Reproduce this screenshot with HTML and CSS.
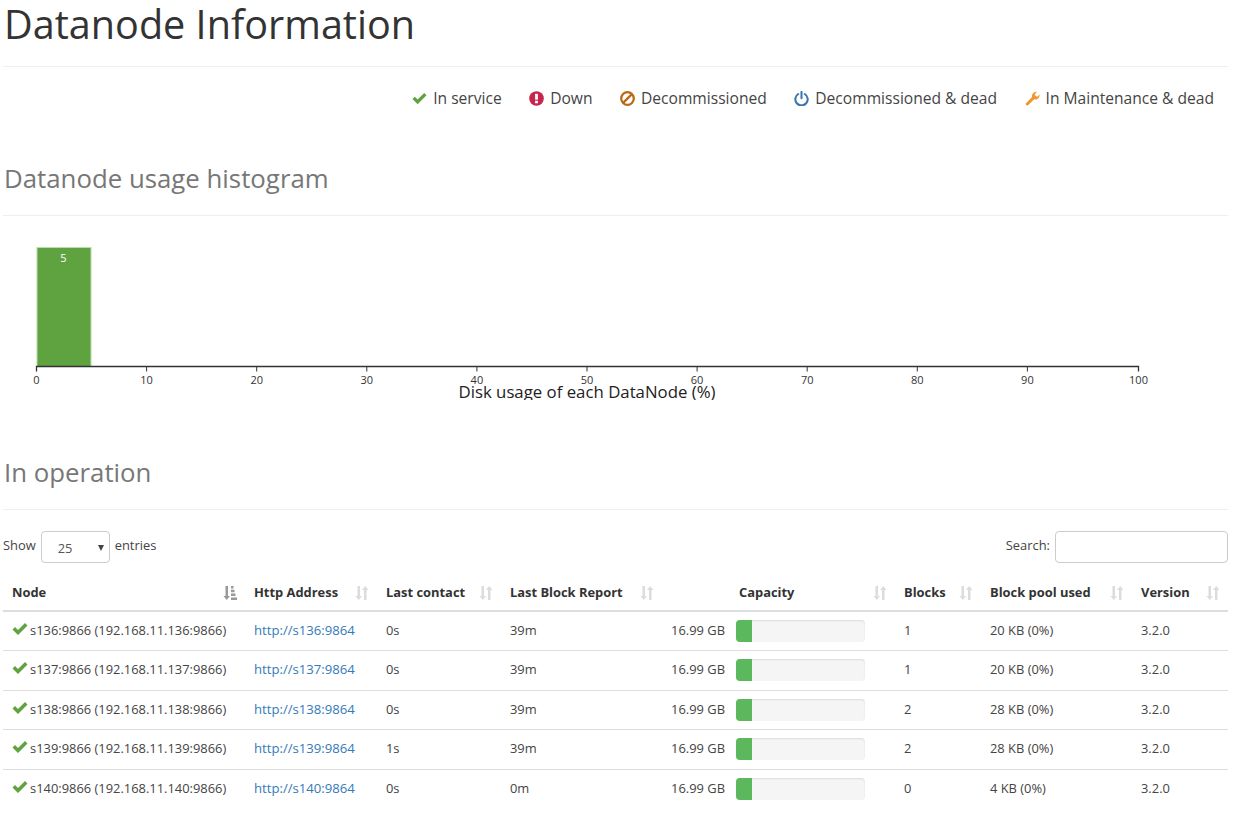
FILE: index.html
```html
<!DOCTYPE html>
<html lang="en">
<head>
  <meta charset="UTF-8" />
  <title>Datanode Information</title>
  <link rel="stylesheet" href="styles.css">
</head>
<body>
  <svg class="defs" width="0" height="0" aria-hidden="true">
    <symbol id="i-ok" viewBox="0 0 16 16"><path d="M0.5 8.6 3 6.1 6 9.1 13 2.1 15.5 4.6 6 14.1Z"/></symbol>
    <symbol id="i-sort" viewBox="0 0 14 16"><path d="M2.5 1H5V11H7L3.7 15 0.5 11H2.5Z"/><path d="M9 15H11.500V5H13.500L10.200 1 7 5H9Z"/></symbol>
    <symbol id="i-sort-asc" viewBox="0 0 14 16"><path d="M2.500 1H5V11H7L3.700 15 0.500 11H2.500Z"/><path d="M8 1H10.500V3.500H8ZM8 4.800H11.500V7.300H8ZM8 8.600H12.500V11.100H8ZM8 12.400H14V14.900H8Z"/></symbol>
  </svg>

  <h1 class="page-title">Datanode Information</h1>

  <ul class="legend">
    <li class="st-alive"><svg class="st-icon"><use href="#i-ok"/></svg>In service</li>
    <li class="st-down">
      <svg class="st-icon" viewBox="0 0 16 16"><circle cx="8" cy="8" r="7.800"/><rect class="cut" x="6.500" y="3" width="3" height="6.200"/><rect class="cut" x="6.500" y="10.400" width="3" height="2.700"/></svg>Down</li>
    <li class="st-decom">
      <svg class="st-icon" viewBox="0 0 16 16"><circle class="ring" cx="8" cy="8" r="6.700"/><path class="ring" d="M3.300 12.700 12.700 3.300"/></svg>Decommissioned</li>
    <li class="st-decom-dead">
      <svg class="st-icon" viewBox="0 0 16 16"><path class="ring" d="M4.500 3.200A6.600 6.600 0 1 0 11.500 3.200"/><path class="ring" d="M8 1V7.800"/></svg>Decommissioned &amp; dead</li>
    <li class="st-maint">
      <svg class="st-icon" viewBox="0 0 16 16"><path d="M0.800 13.400 7.600 6.400C6.900 3.600 9.200 0.400 13 0.800L10.400 3.400 11.200 5.400 13.200 6 15.600 3.600C15.800 7.200 13 9.600 9.800 8.800L3 15.400C2 16 0.200 14.600 0.800 13.400Z"/></svg>In Maintenance &amp; dead</li>
  </ul>

  <h2 class="section-title section-histogram">Datanode usage histogram</h2>

  <svg class="histogram" width="1225" height="184" viewBox="0 0 1225 184">
    <rect class="bar" x="34" y="31.500" width="54" height="119"/>
    <text class="bar-label" x="60.500" y="46">5</text>
    <path class="axis" d="M33.500 155.500V150.500H1135.500V155.500"/>
    <g class="ticks">
      <path d="M143.600 150.500v5M253.700 150.500v5M363.800 150.500v5M473.900 150.500v5M584 150.500v5M694.100 150.500v5M804.200 150.500v5M914.300 150.500v5M1024.400 150.500v5"/>
    </g>
    <g class="tick-labels">
      <text x="33.500" y="168">0</text>
      <text x="143.600" y="168">10</text>
      <text x="253.700" y="168">20</text>
      <text x="363.800" y="168">30</text>
      <text x="473.900" y="168">40</text>
      <text x="584" y="168">50</text>
      <text x="694.100" y="168">60</text>
      <text x="804.200" y="168">70</text>
      <text x="914.300" y="168">80</text>
      <text x="1024.400" y="168">90</text>
      <text x="1135.500" y="168">100</text>
    </g>
    <text class="axis-title" x="584" y="182">Disk usage of each DataNode (%)</text>
  </svg>

  <h2 class="section-title section-operation">In operation</h2>

  <div class="table-controls">
    <label class="length-control">Show
      <span class="select-wrap">
        <select><option>25</option><option>50</option><option>100</option></select>
      </span>
      entries</label>
    <label class="search-control">Search: <input type="search" /></label>
  </div>

  <table class="nodes">
    <colgroup>
      <col class="c-node"><col class="c-http"><col class="c-contact"><col class="c-report">
      <col class="c-capacity"><col class="c-blocks"><col class="c-pool"><col class="c-version">
    </colgroup>
    <thead>
      <tr>
        <th>Node<svg class="sort sorted"><use href="#i-sort-asc"/></svg></th>
        <th>Http Address<svg class="sort"><use href="#i-sort"/></svg></th>
        <th>Last contact<svg class="sort"><use href="#i-sort"/></svg></th>
        <th>Last Block Report<svg class="sort"><use href="#i-sort"/></svg></th>
        <th class="th-capacity">Capacity<svg class="sort"><use href="#i-sort"/></svg></th>
        <th>Blocks<svg class="sort"><use href="#i-sort"/></svg></th>
        <th>Block pool used<svg class="sort"><use href="#i-sort"/></svg></th>
        <th>Version<svg class="sort"><use href="#i-sort"/></svg></th>
      </tr>
    </thead>
    <tbody>
      <tr>
        <td class="node"><svg class="node-ok"><use href="#i-ok"/></svg>s136:9866 (192.168.11.136:9866)</td>
        <td><a href="#">http://s136:9864</a></td>
        <td>0s</td><td>39m</td>
        <td><div class="capacity"><span>16.99 GB</span><div class="progress"><div class="progress-bar"></div></div></div></td>
        <td>1</td><td>20 KB (0%)</td><td>3.2.0</td>
      </tr>
      <tr>
        <td class="node"><svg class="node-ok"><use href="#i-ok"/></svg>s137:9866 (192.168.11.137:9866)</td>
        <td><a href="#">http://s137:9864</a></td>
        <td>0s</td><td>39m</td>
        <td><div class="capacity"><span>16.99 GB</span><div class="progress"><div class="progress-bar"></div></div></div></td>
        <td>1</td><td>20 KB (0%)</td><td>3.2.0</td>
      </tr>
      <tr>
        <td class="node"><svg class="node-ok"><use href="#i-ok"/></svg>s138:9866 (192.168.11.138:9866)</td>
        <td><a href="#">http://s138:9864</a></td>
        <td>0s</td><td>39m</td>
        <td><div class="capacity"><span>16.99 GB</span><div class="progress"><div class="progress-bar"></div></div></div></td>
        <td>2</td><td>28 KB (0%)</td><td>3.2.0</td>
      </tr>
      <tr>
        <td class="node"><svg class="node-ok"><use href="#i-ok"/></svg>s139:9866 (192.168.11.139:9866)</td>
        <td><a href="#">http://s139:9864</a></td>
        <td>1s</td><td>39m</td>
        <td><div class="capacity"><span>16.99 GB</span><div class="progress"><div class="progress-bar"></div></div></div></td>
        <td>2</td><td>28 KB (0%)</td><td>3.2.0</td>
      </tr>
      <tr>
        <td class="node"><svg class="node-ok"><use href="#i-ok"/></svg>s140:9866 (192.168.11.140:9866)</td>
        <td><a href="#">http://s140:9864</a></td>
        <td>0s</td><td>0m</td>
        <td><div class="capacity"><span>16.99 GB</span><div class="progress"><div class="progress-bar"></div></div></div></td>
        <td>0</td><td>4 KB (0%)</td><td>3.2.0</td>
      </tr>
    </tbody>
  </table>
</body>
</html>
```
FILE: styles.css
```css
html, body {
  margin: 0;
  padding: 0;
  background: #fff;
}
body {
  font-family: "Open Sans", "Noto Sans", sans-serif;
  color: #333;
  font-size: 12.900px;
  padding: 0 12px 0 3px;
}
.defs {
  display: block;
  height: 0;
}
.page-title {
  font-size: 39.600px;
  font-weight: 400;
  line-height: 48px;
  margin: 0;
  padding: 0 0 18px 1px;
  border-bottom: 1px solid #eee;
  color: #333;
}
.legend {
  list-style: none;
  margin: 0;
  padding: 20px 14px 0 0;
  display: flex;
  justify-content: flex-end;
  gap: 27.500px;
  font-size: 15.600px;
  line-height: 22px;
}
.legend li {
  display: flex;
  align-items: center;
  color: #444;
}
.st-icon {
  width: 15px;
  height: 15px;
  margin-right: 6px;
}
.st-alive .st-icon { fill: #5fa341; }
.st-down .st-icon { fill: #c7254e; }
.st-down .cut { fill: #fff; }
.st-decom .ring { fill: none; stroke: #b96a15; stroke-width: 2.400; }
.st-decom-dead .ring { fill: none; stroke: #3a76ad; stroke-width: 2.200; stroke-linecap: round; }
.st-maint .st-icon { fill: #f0962f; }
.section-title {
  font-size: 25.800px;
  font-weight: 400;
  line-height: 34px;
  color: #777;
  margin: 0;
  padding: 0 0 20px 1px;
  border-bottom: 1px solid #eee;
}
.section-histogram { margin-top: 52px; }
.section-operation { margin-top: 55px; }
.histogram {
  display: block;
  font-family: "Open Sans", sans-serif;
}
.bar { fill: #5fa341; stroke: #bcdcae; stroke-width: 1; }
.bar-label { fill: #fff; font-size: 11px; text-anchor: middle; }
.axis { fill: none; stroke: #333; stroke-width: 1.300; }
.ticks path { fill: none; stroke: #333; stroke-width: 1; }
.tick-labels text { font-size: 11px; fill: #333; text-anchor: middle; }
.axis-title { font-size: 16.800px; fill: #222; text-anchor: middle; }
.table-controls {
  display: flex;
  justify-content: space-between;
  align-items: center;
  margin-top: 19px;
  height: 32px;
}
.length-control, .search-control {
  display: flex;
  align-items: center;
  gap: 5px;
  color: #444;
}
.select-wrap {
  position: relative;
  display: block;
  margin: 2px 0 -2px;
}
.select-wrap::after {
  content: "";
  position: absolute;
  right: 6px;
  top: 14px;
  border-left: 3.500px solid transparent;
  border-right: 3.500px solid transparent;
  border-top: 6px solid #444;
}
.select-wrap select {
  appearance: none;
  display: block;
  width: 69px;
  height: 32px;
  padding: 2px 0 0 16px;
  border: 1px solid #ccc;
  border-radius: 4px;
  background: #fff;
  color: #555;
  font: inherit;
}
.search-control input {
  width: 173px;
  height: 32px;
  margin: 2px 0 -2px;
  box-sizing: border-box;
  border: 1px solid #ccc;
  border-radius: 4px;
  background: #fff;
  outline: none;
}
.nodes {
  width: 1225px;
  table-layout: fixed;
  border-collapse: collapse;
  margin-top: 13px;
}
.c-node { width: 242px; }
.c-http { width: 132px; }
.c-contact { width: 124px; }
.c-report { width: 161px; }
.c-capacity { width: 233px; }
.c-blocks { width: 86px; }
.c-pool { width: 151px; }
.c-version { width: 96px; }
.nodes th {
  position: relative;
  height: 36px;
  padding: 0 9px;
  text-align: left;
  font-weight: 700;
  border-bottom: 2px solid #ddd;
  white-space: nowrap;
}
.nodes th.th-capacity { padding-left: 77px; }
.sort {
  position: absolute;
  right: 8px;
  top: 11px;
  width: 14px;
  height: 16px;
  fill: #dcdcdc;
}
.sort.sorted { fill: #999; }
.nodes td {
  height: 39.500px;
  box-sizing: border-box;
  padding: 0 9px 2px;
  border-bottom: 1px solid #ddd;
  white-space: nowrap;
  color: #444;
}
.nodes tbody tr:last-child td { border-bottom: none; }
.nodes a { color: #337ab7; text-decoration: none; font-size: 13.150px; }
.node-ok {
  width: 16px;
  height: 16px;
  fill: #5fa341;
  margin: -6px 2px 0 0;
  vertical-align: -2px;
}
.capacity {
  display: flex;
  align-items: center;
  justify-content: flex-end;
  padding-right: 21px;
  gap: 11px;
  margin-bottom: -2px;
}
.capacity span { margin-bottom: 2px; }
.progress {
  width: 129px;
  height: 22px;
  border-radius: 4px;
  background: #f5f5f5;
  box-shadow: inset 0 1px 2px rgba(0, 0, 0, .1);
  overflow: hidden;
}
.progress-bar {
  width: 16px;
  height: 100%;
  background: #5cb85c;
}
```
